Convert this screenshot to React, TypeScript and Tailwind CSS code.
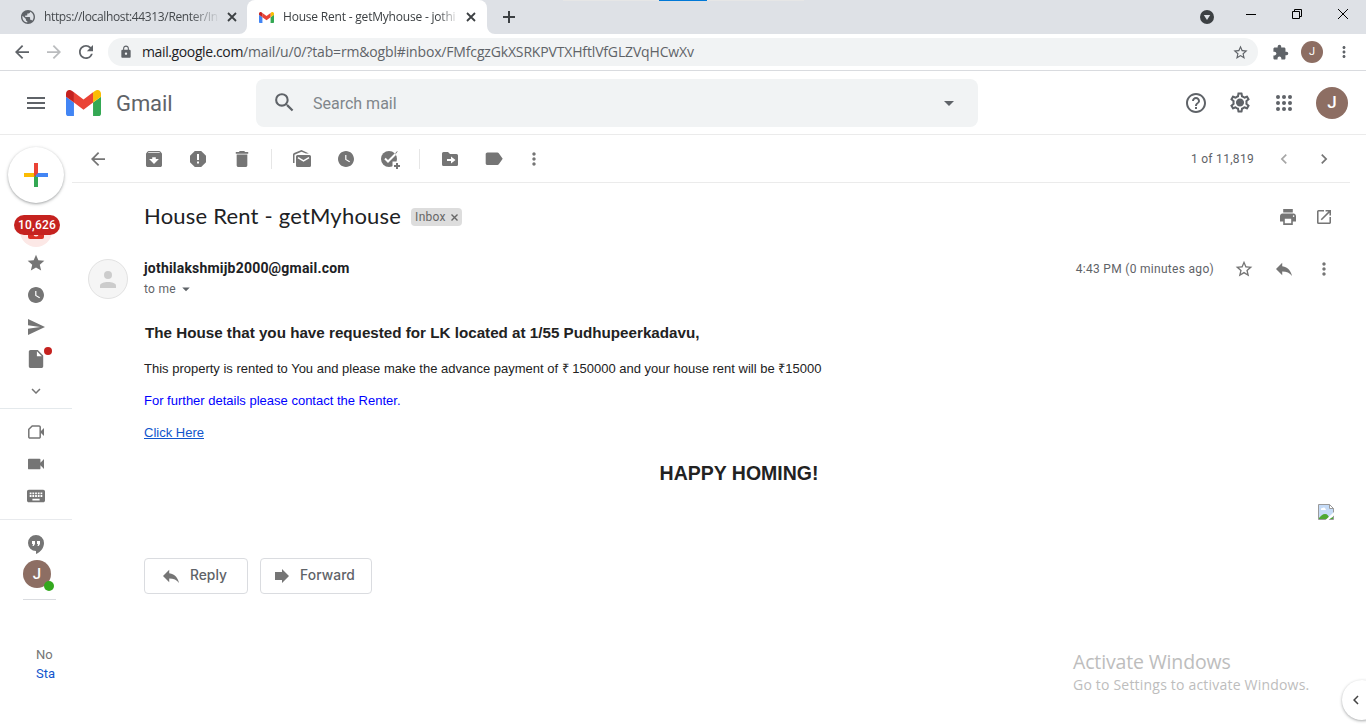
import React from "react";
import type { ReactNode } from "react";
import {
  MdArchive, MdArrowBack, MdArrowDropDown, MdArrowForward, MdChevronLeft, MdChevronRight,
  MdDelete, MdExpandMore, MdExtension, MdHelpOutline, MdKeyboard, MdLabel, MdLock,
  MdMoreVert, MdOpenInNew, MdPrint, MdPublic, MdRefresh, MdReply, MdSearch,
  MdSend, MdStar, MdStarBorder, MdVideocam, MdWatchLater, MdOutlineSettings, MdInsertDriveFile,
} from "react-icons/md";

/** Fixed 20px cell that keeps its icon centred whatever the icon's own size. */
function Cell({ children, className = "" }: { children: ReactNode; className?: string }) {
  return (
    <span className={`flex h-5 w-5 shrink-0 items-center justify-center [&>svg]:shrink-0 ${className}`}>
      {children}
    </span>
  );
}

function GmailMark({ className }: { className: string }) {
  return (
    <svg viewBox="52 42 88 66" preserveAspectRatio="none" className={className}>
      <path fill="#4285f4" d="M58 108h14V74L52 59v43c0 3.32 2.69 6 6 6" />
      <path fill="#34a853" d="M120 108h14c3.32 0 6-2.69 6-6V59l-20 15" />
      <path fill="#fbbc04" d="M120 48v26l20-15v-8c0-7.42-8.47-11.65-14.4-7.2" />
      <path fill="#ea4335" d="M72 74V48l24 18 24-18v26L96 92" />
      <path fill="#c5221f" d="M52 51v8l20 15V48l-5.6-4.2c-5.94-4.45-14.4-.22-14.4 7.2" />
    </svg>
  );
}

function TabClose() {
  return (
    <svg viewBox="0 0 10 10" className="ml-[5px] h-[10px] w-[10px] shrink-0">
      <path d="M1 1l8 8M9 1L1 9" stroke="currentColor" strokeWidth="1.8" />
    </svg>
  );
}

function TabStrip() {
  return (
    <div className="flex h-[34px] bg-[#dee1e6] font-['Open_Sans','Noto_Sans',sans-serif] text-xs text-[#3c4043]">
      <div className="flex w-[247px] items-center pl-[21px]">
        <MdPublic viewBox="2 2 20 20" size={14} className="shrink-0 text-[#5f6368]" />
        <span className="ml-[9px] w-[178px] whitespace-nowrap tracking-[-0.36px] text-[#45494d] [mask-image:linear-gradient(to_right,black_82%,transparent_99%)]">
          https://localhost:44313/Renter/In
        </span>
        <TabClose />
      </div>
      <div className="relative flex w-[240px] items-center rounded-t-lg bg-white pl-3">
        <svg viewBox="0 0 8 8" className="absolute bottom-0 -left-2 h-2 w-2"><path d="M8 0v8H0a8 8 0 0 0 8-8" fill="#fff" /></svg>
        <svg viewBox="0 0 8 8" className="absolute -right-2 bottom-0 h-2 w-2"><path d="M0 0v8h8a8 8 0 0 1-8-8" fill="#fff" /></svg>
        <GmailMark className="h-[11px] w-[15px] shrink-0" />
        <span className="ml-[9px] w-[178px] whitespace-nowrap tracking-[-0.2px] [mask-image:linear-gradient(to_right,black_87%,transparent_99%)]">
          House Rent - getMyhouse - jothi
        </span>
        <TabClose />
      </div>
      <svg viewBox="0 0 12 12" className="mt-[11px] ml-4 h-3 w-3"><path d="M5 0h2v5h5v2H7v5H5V7H0V5h5z" fill="#3c4043" /></svg>
      <div className="ml-[48px] flex h-px w-[241px] justify-start bg-[#e6e6e6] pl-24"><span className="h-px w-12 bg-[#0078d7]" /></div>
      <div className="ml-auto flex text-black">
        <svg viewBox="0 0 14 14" className="mt-[10px] mr-[32px] h-[14px] w-[14px]">
          <circle cx="7" cy="7" r="7" fill="#3c4043" /><path d="M3.8 5h6.4L7 10z" fill="#dee1e6" />
        </svg>
        <svg viewBox="0 0 10 10" className="mt-[9px] mr-9 h-[10px] w-[10px]"><path d="M0 5.5h10" stroke="currentColor" /></svg>
        <svg viewBox="0 0 10 10" fill="none" stroke="currentColor" className="mt-[9px] mr-9 h-[10px] w-[10px]"><path d="M.5 2.5h7v7h-7zM2.5 2.5v-2h7v7h-2" /></svg>
        <svg viewBox="0 0 10 10" className="mt-[9px] mr-[18px] h-[10px] w-[10px]"><path d="M0 0l10 10M10 0L0 10" stroke="currentColor" /></svg>
      </div>
    </div>
  );
}

function AddressBar() {
  return (
    <div className="flex h-[37px] items-center border-b border-[#d9dbdf] bg-white pr-3 pl-3 text-[#5f6368]">
      <Cell><MdArrowBack viewBox="4 4 16 16" size={14} /></Cell>
      <Cell className="ml-3 text-[#babcbe]"><MdArrowForward viewBox="4 4 16 16" size={14} /></Cell>
      <Cell className="ml-3"><MdRefresh viewBox="4 4 16 16" size={14} /></Cell>
      <div className="ml-3 flex h-7 w-[1150px] items-center rounded-full bg-[#f1f3f4] pr-[9px] pl-[11px]">
        <MdLock size={14} />
        <span className="ml-[9px] font-['Open_Sans','Noto_Sans',sans-serif] text-sm leading-5 whitespace-nowrap">
          <span className="tracking-[-0.38px] text-[#202124]">mail.google.com</span>
          <span className="tracking-[-0.16px]">/mail/u/0/?tab=rm&amp;ogbl#inbox/FMfcgzGkXSRKPVTXHftlVfGLZVqHCwXv</span>
        </span>
        <MdStarBorder size={17} className="ml-auto" />
      </div>
      <Cell className="ml-3"><MdExtension size={17} /></Cell>
      <span className="ml-[11px] flex h-[22px] w-[22px] items-center justify-center rounded-full bg-[#8d6e63] font-[Roboto,sans-serif] text-[11px] text-white">J</span>
      <Cell className="ml-[11px]"><MdMoreVert size={18} /></Cell>
    </div>
  );
}

function AppsGrid() {
  return (
    <svg viewBox="0 0 16 16" className="mx-1 h-4 w-4" fill="currentColor">
      {[2, 8, 14].flatMap((y) => [2, 8, 14].map((x) => <circle key={`${x}-${y}`} cx={x} cy={y} r="2" />))}
    </svg>
  );
}

function GmailHeader() {
  return (
    <header className="flex h-16 items-center border-b border-[#ebebeb] text-[#5f6368]">
      <svg viewBox="0 0 18 12" className="ml-[27px] h-3 w-[18px]"><path d="M0 0h18v2H0zM0 5h18v2H0zM0 10h18v2H0z" fill="currentColor" /></svg>
      <GmailMark className="ml-[21px] h-[26px] w-[35px]" />
      <span className="mt-[3px] ml-[15px] w-[58px] font-[Roboto,sans-serif] text-[22px] leading-7 font-normal tracking-[-0.1px]">Gmail</span>
      <div className="ml-[82px] flex h-12 w-[722px] items-center rounded-lg bg-[#f1f3f4] pr-[17px] pl-4">
        <MdSearch size={25} />
        <span className="mt-[2px] ml-4 font-[Roboto,sans-serif] text-base text-[#80868b]">Search mail</span>
        <MdArrowDropDown size={24} className="ml-auto" />
      </div>
      <div className="ml-auto flex items-center gap-5 pr-[18px]">
        <MdHelpOutline size={24} />
        <span className="flex h-6 w-6 items-center justify-center">
          <svg viewBox="0 0 24 24" className="h-[25px] w-6 overflow-visible">
            <MdOutlineSettings size={24} /><circle cx="12" cy="12" r="3.5" fill="currentColor" />
          </svg>
        </span>
        <AppsGrid />
        <span className="flex h-8 w-8 items-center justify-center rounded-full bg-[#8d6e63] pt-px font-[Roboto,sans-serif] text-[17px] font-medium text-white">J</span>
      </div>
    </header>
  );
}

function Sidebar() {
  return (
    <aside className="flex w-[72px] shrink-0 flex-col text-[#757575]">
      <div className="mt-3 ml-2 flex h-14 w-14 items-center justify-center rounded-full bg-white shadow-[0_1px_2px_0_rgba(60,64,67,0.3),0_1px_3px_1px_rgba(60,64,67,0.15)]">
        <svg viewBox="0 0 24 24" className="h-6 w-6">
          <path fill="#34a853" d="M10 12h4v12h-4z" /><path fill="#4285f4" d="M12 10h12v4H12z" />
          <path fill="#fbbc04" d="M0 10h12l-2 4H0z" /><path fill="#ea4335" d="M10 0h4v10l-4 4z" />
        </svg>
      </div>
      <div className="relative mt-3 h-8">
        <span className="absolute top-0 left-5 flex h-8 w-8 items-end justify-center rounded-full bg-[#fce8e6] pb-2">
          <svg viewBox="0 0 16 16" className="h-4 w-4"><path fill="#d93025" d="M2 0h12a2 2 0 0 1 2 2v12a2 2 0 0 1-2 2H2a2 2 0 0 1-2-2V2a2 2 0 0 1 2-2" /><path d="M5.5 11a2.5 2.5 0 0 0 5 0z" fill="#fce8e6" /></svg>
        </span>
        <span className="absolute top-0 left-[14px] flex h-5 w-[46px] items-center justify-center rounded-full bg-[#c5221f] font-[Roboto,sans-serif] text-xs font-medium tracking-[0.2px] text-white">10,626</span>
      </div>
      <div className="flex flex-col items-center gap-3 pt-[6px]">
        <Cell><MdStar size={20} /></Cell>
        <Cell><MdWatchLater viewBox="2 2 20 20" size={16} /></Cell>
        <Cell><MdSend viewBox="2 3 21 18" preserveAspectRatio="none" size={17} className="h-4" /></Cell>
        <Cell className="relative">
          <MdInsertDriveFile viewBox="3 2 18 20" size={18} />
          <span className="absolute -top-[2px] left-[18px] h-2 w-2 rounded-full bg-[#c5221f]" />
        </Cell>
        <Cell><MdExpandMore size={18} /></Cell>
      </div>
      <div className="mt-[7px] flex flex-col items-center gap-3 border-t border-[#e4e9ec] pt-[13px]">
        <Cell>
          <svg viewBox="0 0 16 14" className="h-[14px] w-4"><path d="M4.2.9H11a1.2 1.2 0 0 1 1.2 1.2v9.8a1.2 1.2 0 0 1-1.2 1.2H2A1.2 1.2 0 0 1 .8 11.9V4.3z" fill="none" stroke="currentColor" strokeWidth="1.5" /><path d="M12 7l4-4v8z" fill="currentColor" /></svg>
        </Cell>
        <Cell><MdVideocam viewBox="3 3 18 18" size={16} /></Cell>
        <Cell><MdKeyboard viewBox="2 2 20 20" size={18} /></Cell>
      </div>
      <div className="mt-[13px] flex flex-col border-t border-[#e8eaed]">
        <svg viewBox="0 0 16 19" className="mt-[15px] ml-7 h-[19px] w-4">
          <path d="M8 0a8 8 0 0 0 0 16v3c4.500-1.800 8-6 8-11a8 8 0 0 0-8-8" fill="currentColor" />
          <path d="M4 6h3v3l-1.300 2H4.500L5 9H4zM9 6h3v3l-1.300 2H9.500l.5-2H9z" fill="#fff" />
        </svg>
        <div className="relative mt-[6px] ml-[23px] flex h-7 w-7 items-center justify-center rounded-full bg-[#8d6e63] font-[Roboto,sans-serif] text-[15px] font-medium text-white">
          J<span className="absolute top-[21px] left-[21px] h-[10px] w-[10px] rounded-full bg-[#34a81e]" />
        </div>
        <div className="mt-[11px] ml-[23px] h-px w-[33px] bg-[#dadce0]" />
        <div className="mt-[45px] ml-9 w-5 font-[Roboto,sans-serif] text-[13px] leading-[19px] whitespace-nowrap">
          <p>No</p>
          <p className="text-[#1155cc]">Sta</p>
        </div>
      </div>
    </aside>
  );
}

function MessageToolbar() {
  return (
    <div className="mr-4 flex h-12 items-center border-b border-[#ebebeb] pt-px pl-4 text-[#757575]">
      <Cell><MdArrowBack viewBox="4 4 16 16" size={14} /></Cell>
      <Cell className="ml-9"><MdArchive viewBox="3 3 18 18" size={16} /></Cell>
      <Cell className="ml-6">
        <svg viewBox="0 0 16 16" className="h-4 w-4"><path d="M4.800 0h6.400L16 4.800v6.400L11.200 16H4.800L0 11.200V4.800z" fill="currentColor" stroke="none" /><path d="M7 3h2v6H7zM7 10.500h2v2H7z" fill="#fff" /></svg>
      </Cell>
      <Cell className="ml-6"><MdDelete viewBox="3 3 18 18" size={16} /></Cell>
      <span className="ml-[19px] h-5 w-px bg-[#e6e6e6]" />
      <Cell className="ml-5">
        <svg viewBox="0 0 18 18" className="h-[18px] w-[18px]">
          <path d="M0 13V4.500Q0 3.500 1 3L8.500 0 16 3.500h-3L8.500 1.700 1.500 4.800V13z" fill="currentColor" />
          <path d="M4.500 5h12A1.500 1.500 0 0 1 18 6.500v9a1.500 1.500 0 0 1-1.500 1.500h-12A1.500 1.500 0 0 1 3 15.500v-9A1.500 1.500 0 0 1 4.500 5" fill="currentColor" />
          <path d="M5 7.700l5.500 3.300L16 7.700" stroke="#fff" strokeWidth="1.500" fill="none" />
        </svg>
      </Cell>
      <Cell className="ml-6"><MdWatchLater viewBox="2 2 20 20" size={16} /></Cell>
      <Cell className="ml-6">
        <svg viewBox="0 0 20 20" className="h-5 w-5">
          <circle cx="9" cy="10" r="8" fill="currentColor" />
          <path d="M5 9.500l3 3 9-9" stroke="#fff" strokeWidth="2" fill="none" />
          <path d="M16 3l2-1-3 4z" fill="currentColor" />
          <path d="M12.500 12.500h7v7h-7z" fill="#fff" />
          <path d="M16 14h2v2h2v2h-2v2h-2v-2h-2v-2h2z" fill="currentColor" />
        </svg>
      </Cell>
      <span className="ml-[19px] h-5 w-px bg-[#e6e6e6]" />
      <Cell className="ml-5">
        <svg viewBox="0 0 16 14" className="h-[14px] w-4"><path d="M1.500 0H6l2 2h6.500A1.500 1.500 0 0 1 16 3.500v9a1.500 1.500 0 0 1-1.500 1.500h-13A1.500 1.500 0 0 1 0 12.500v-11A1.500 1.500 0 0 1 1.500 0" fill="currentColor" /><path d="M5 6.900h4V4.500l4.500 3.500L9 11.500V9.100H5z" fill="#fff" /></svg>
      </Cell>
      <Cell className="ml-6"><MdLabel size={21.500} /></Cell>
      <Cell className="ml-5"><MdMoreVert size={20} /></Cell>
      <span className="ml-auto font-[Roboto,sans-serif] text-xs tracking-[0.3px] text-[#5f6368]">1 of 11,819</span>
      <Cell className="ml-5 text-[#a6a6a6]"><MdChevronLeft size={20} /></Cell>
      <Cell className="mr-4 ml-5"><MdChevronRight size={20} /></Cell>
    </div>
  );
}

function BrokenImage() {
  return (
    <svg viewBox="0 0 16 16" className="h-4 w-4">
      <path d="M.5.5h11l4 4v11H.5z" fill="#c5dbf7" stroke="#9a9a9a" />
      <path d="M11.500.5v4h4z" fill="#fff" stroke="#9a9a9a" />
      <path d="M3 5.500a1.300 1.300 0 0 1 1.500-1.400 1.500 1.500 0 0 1 2.700.3 1 1 0 0 1 .3 1.600H3z" fill="#fff" />
      <path d="M1 15v-1c2-2 3.500-4 6-4s4 2 4.500 5z" fill="#4ea832" />
      <path d="M10 15l5-2v2z" fill="#4ea832" />
      <path d="M7.500 16L16 8v3.500L10.500 16z" fill="#fff" />
    </svg>
  );
}

function MessageView() {
  return (
    <main className="flex flex-1 flex-col">
      <MessageToolbar />
      <div className="flex h-[68px] items-center pr-8 pl-[72px] text-[#757575]">
        <h1 className="mb-[2px] font-[Lato,sans-serif] text-[22px] leading-7 tracking-[0.2px] text-[#202124]">House Rent - getMyhouse</h1>
        <span className="ml-[10px] flex h-[18px] w-[51px] items-center rounded bg-[#dddddd] pl-1 font-[Roboto,sans-serif] text-xs tracking-[0.3px] text-[#666]">
          Inbox<svg viewBox="0 0 7 7" className="mt-px ml-[5px] h-[7px] w-[7px]"><path d="M.5.5l6 6M6.500.5l-6 6" stroke="currentColor" strokeWidth="1.400" /></svg>
        </span>
        <Cell className="ml-auto"><MdPrint viewBox="2 3 20 18" preserveAspectRatio="none" size={16} /></Cell>
        <Cell className="ml-4"><MdOpenInNew viewBox="3 3 18 18" size={14} strokeWidth={0} /></Cell>
      </div>
      <div className="flex h-[70px] pt-2 pr-8 pl-4 font-[Roboto,sans-serif] text-xs text-[#5f6368]">
        <span className="flex h-10 w-10 items-center justify-center rounded-full border border-[#e2e2e2] bg-[#f5f5f5]">
          <svg viewBox="0 0 16 17" className="h-[17px] w-4" fill="#cccccc"><circle cx="8" cy="4" r="4" /><path d="M0 17v-2.500C0 12.500 4 11 8 11s8 1.500 8 3.500V17z" /></svg>
        </span>
        <div className="ml-4">
          <p className="-mt-px mb-px text-sm leading-5 font-bold tracking-[0.2px] text-[#202124]">jothilakshmijb2000@gmail.com</p>
          <p className="flex items-center leading-5 tracking-[0.3px]">to me<MdArrowDropDown size={18} className="ml-px" /></p>
        </div>
        <span className="ml-auto leading-5 tracking-[0.3px]">4:43 PM (0 minutes ago)</span>
        <Cell className="ml-5 text-[#757575]"><MdStarBorder size={20} /></Cell>
        <Cell className="ml-5 text-[#757575]"><MdReply viewBox="3 3 18 18" size={16} /></Cell>
        <Cell className="ml-5 text-[#757575]"><MdMoreVert size={20} /></Cell>
      </div>
      <article className="flex flex-col pr-8 pl-[72px] font-['Liberation_Sans',Arial,sans-serif] text-[13px] leading-5 text-[#222]">
        <h3 className="mt-[2px] ml-px text-[15.2px] font-bold">The House that you have requested for LK located at 1/55 Pudhupeerkadavu,</h3>
        <p className="mt-4">This property is rented to You and please make the advance payment of ₹ 150000 and your house rent will be ₹15000</p>
        <p className="mt-3 text-[#0000ff]">For further details please contact the Renter.</p>
        <a className="mt-3 self-start text-[#1155cc] underline">Click Here</a>
        <h2 className="mt-5 text-center text-[19.5px] font-bold">HAPPY HOMING!</h2>
        <div className="mt-[21px] flex justify-end"><BrokenImage /></div>
      </article>
      <div className="mt-[38px] ml-[72px] flex gap-3 font-[Inter,sans-serif] text-[13.8px] font-medium text-[#5f6368]">
        <button className="flex h-9 w-[104px] items-center rounded border border-[#dadce0] pl-[18px]">
          <MdReply viewBox="3 3 18 18" size={16} className="text-[#757575]" /><span className="mb-[2px] ml-[11px]">Reply</span>
        </button>
        <button className="flex h-9 w-28 items-center rounded border border-[#dadce0] pl-[14px]">
          <svg viewBox="0 0 14 14" className="h-[14px] w-[14px] text-[#757575]"><path d="M0 3h7V0l7 7-7 7v-3H0z" fill="currentColor" /></svg>
          <span className="mb-[2px] ml-[11px] tracking-[0.1px]">Forward</span>
        </button>
      </div>
    </main>
  );
}

export default function App() {
  return (
    <div className="relative flex h-[728px] w-[1366px] flex-col overflow-hidden bg-white">
      <TabStrip />
      <AddressBar />
      <GmailHeader />
      <div className="flex flex-1">
        <Sidebar />
        <MessageView />
      </div>
      <div className="absolute top-[650px] left-[1073px] font-['Open_Sans','Noto_Sans',sans-serif] whitespace-nowrap text-[#bdbdbd]">
        <p className="text-[19.5px] leading-6 tracking-[-0.15px]">Activate Windows</p>
        <p className="text-sm leading-[22px] tracking-[0.2px]">Go to Settings to activate Windows.</p>
      </div>
      <div className="absolute top-[680px] left-[1342px] flex h-10 w-10 items-center rounded-full bg-white pl-[5px] text-[#444] shadow-[0_1px_3px_rgba(60,64,67,0.45)]">
        <MdChevronLeft size={18} />
      </div>
    </div>
  );
}
